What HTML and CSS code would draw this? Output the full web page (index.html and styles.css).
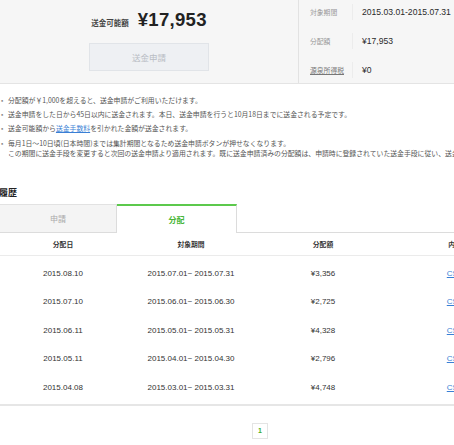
FILE: index.html
```html
<!DOCTYPE html>
<html lang="ja">
<head>
<meta charset="utf-8">
<title>送金</title>
<link rel="stylesheet" href="styles.css">
</head>
<body>
<div class="page">
  <section class="summary">
    <div class="summary-left">
      <div class="amount-line">
        <span class="amount-label">送金可能額</span>
        <span class="amount-value">¥17,953</span>
      </div>
      <button class="btn-request" type="button">送金申請</button>
    </div>
    <div class="summary-right">
      <div class="info-row">
        <span class="info-label">対象期間</span>
        <span class="info-value">2015.03.01-2015.07.31</span>
      </div>
      <div class="info-row">
        <span class="info-label">分配額</span>
        <span class="info-value">¥17,953</span>
      </div>
      <div class="info-row">
        <span class="info-label info-link">源泉所得税</span>
        <span class="info-value">¥0</span>
      </div>
    </div>
  </section>

  <ul class="notes">
    <li>分配額が￥1,000を超えると、送金申請がご利用いただけます。</li>
    <li>送金申請をした日から45日以内に送金されます。本日、送金申請を行うと10月18日までに送金される予定です。</li>
    <li><span>送金可能額から<a href="#" class="link">送金手数料</a>を引かれた金額が送金されます。</span></li>
    <li><span>毎月1日～10日頃(日本時間)までは集計期間となるため送金申請ボタンが押せなくなります。<br>この期間に送金手段を変更すると次回の送金申請より適用されます。既に送金申請済みの分配額は、申請時に登録されていた送金手段に従い、送金されます。</span></li>
  </ul>

  <h2 class="history-title">履歴</h2>

  <div class="tabs">
    <div class="tab">申請</div>
    <div class="tab tab-active">分配</div>
  </div>

  <table class="history">
    <colgroup>
      <col class="c1"><col class="c2"><col class="c3"><col class="c4">
    </colgroup>
    <thead>
      <tr><th>分配日</th><th>対象期間</th><th>分配額</th><th>内容</th></tr>
    </thead>
    <tbody>
      <tr class="spacer"><td colspan="4"></td></tr>
      <tr><td>2015.08.10</td><td>2015.07.01~ 2015.07.31</td><td>¥3,356</td><td><a href="#" class="link">CSV</a></td></tr>
      <tr><td>2015.07.10</td><td>2015.06.01~ 2015.06.30</td><td>¥2,725</td><td><a href="#" class="link">CSV</a></td></tr>
      <tr><td>2015.06.11</td><td>2015.05.01~ 2015.05.31</td><td>¥4,328</td><td><a href="#" class="link">CSV</a></td></tr>
      <tr><td>2015.05.11</td><td>2015.04.01~ 2015.04.30</td><td>¥2,796</td><td><a href="#" class="link">CSV</a></td></tr>
      <tr><td>2015.04.08</td><td>2015.03.01~ 2015.03.31</td><td>¥4,748</td><td><a href="#" class="link">CSV</a></td></tr>
      <tr class="spacer-end"><td colspan="4"></td></tr>
    </tbody>
  </table>

  <div class="pager">
    <span class="page-num">1</span>
  </div>
</div>
</body>
</html>
```
FILE: styles.css
```css
html, body {
  margin: 0;
  padding: 0;
  overflow: hidden;
  background: #fff;
}
body {
  font-family: "Liberation Sans", "Noto Sans CJK JP", sans-serif;
  color: #333;
}
.page {
  width: 520px;
}

/* summary */
.summary {
  display: flex;
  height: 83px;
  background: #f6f6f6;
  border-bottom: 1px solid #e4e4e4;
}
.summary-left {
  width: 298px;
  display: flex;
  flex-direction: column;
  align-items: center;
}
.amount-line {
  display: flex;
  align-items: baseline;
  gap: 9px;
  margin-top: 9px;
  height: 22px;
}
.amount-label {
  font-size: 7.5px;
  font-weight: bold;
  color: #444;
}
.amount-value {
  font-size: 18.5px;
  font-weight: bold;
  color: #222;
  letter-spacing: 0.3px;
}
.btn-request {
  margin-top: 12px;
  width: 120px;
  height: 28px;
  background: #eef0f3;
  border: 1px solid #e1e4e8;
  color: #b9bdc4;
  font-family: "Noto Sans CJK JP", sans-serif;
  font-size: 8.5px;
  padding: 0;
}
.summary-right {
  border-left: 1px solid #e2e2e2;
  padding: 4px 0 0 11px;
  display: flex;
  flex-direction: column;
  gap: 13px;
}
.info-row {
  display: flex;
  align-items: center;
  height: 16px;
}
.info-label {
  width: 42px;
  font-size: 6.8px;
  color: #999;
  font-family: "Noto Sans CJK JP", sans-serif;
}
.info-link {
  color: #777;
  text-decoration: underline;
}
.info-value {
  border-left: 1px solid #ececec;
  height: 16px;
  line-height: 16px;
  padding-left: 9px;
  font-size: 8.6px;
  color: #2a2a2a;
}

/* notes */
.notes {
  list-style: none;
  margin: 0;
  padding: 11px 0 0 0;
  font-family: "Noto Sans CJK JP", sans-serif;
  font-size: 6.85px;
  line-height: 10.5px;
  color: #555;
}
.notes li {
  display: flex;
  white-space: nowrap;
  margin-bottom: 3.7px;
}
.notes li::before {
  content: "•";
  flex: none;
  width: 7px;
  padding-left: 1px;
  color: #888;
}
.link {
  color: #3a7fd5;
  text-decoration: underline;
}

/* history */
.history-title {
  margin: 28px 0 0 -1px;
  font-family: "Noto Sans CJK JP", sans-serif;
  font-size: 9px;
  line-height: 12px;
  font-weight: bold;
  color: #222;
}
.tabs {
  display: flex;
  margin-top: 5px;
  border-bottom: 1px solid #dcdcdc;
  height: 28px;
}
.tab {
  width: 116px;
  display: flex;
  align-items: center;
  justify-content: center;
  background: #f4f4f4;
  border-top: 1px solid #e2e2e2;
  border-right: 1px solid #dcdcdc;
  color: #aaa;
  font-family: "Noto Sans CJK JP", sans-serif;
  font-size: 8px;
}
.tab-active {
  width: 119px;
  background: #fff;
  border-top: 2px solid #5cc94c;
  color: #47b536;
  font-weight: bold;
  margin-bottom: -1px;
}

.history {
  width: 520px;
  border-collapse: collapse;
  table-layout: fixed;
  border-bottom: 2px solid #e6e6e6;
}
.c1 { width: 126px; }
.c2 { width: 130px; }
.c3 { width: 134px; }
.c4 { width: 130px; }
.history th {
  height: 22px;
  font-family: "Noto Sans CJK JP", sans-serif;
  font-size: 6.8px;
  font-weight: bold;
  color: #333;
  border-bottom: 1px solid #ebebeb;
  padding: 0;
}
.history td {
  height: 28.5px;
  padding: 0;
  text-align: center;
  font-size: 8px;
  color: #333;
}
.history .spacer td {
  height: 3.5px;
}
.history .spacer-end td {
  height: 2px;
}

.pager {
  display: flex;
  justify-content: center;
  padding-top: 17px;
}
.page-num {
  width: 14px;
  height: 14px;
  border: 1px solid #e4e4e4;
  display: flex;
  align-items: center;
  justify-content: center;
  font-size: 7px;
  font-weight: bold;
  color: #3fae2e;
}
```
